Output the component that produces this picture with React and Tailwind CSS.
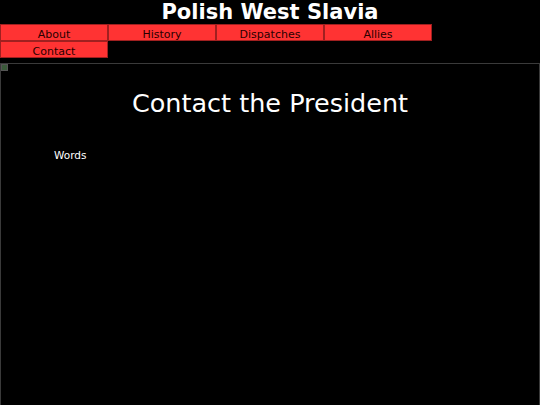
export default function App() {
  const links = ['About', 'History', 'Dispatches', 'Allies', 'Contact']
  return (
    <div className="min-h-[405px] bg-black text-white flex flex-col" style={{ fontFamily: '"DejaVu Sans", Verdana, sans-serif' }}>
      <h1 className="h-6 text-center text-[21px] font-bold leading-6">Polish West Slavia</h1>
      <nav className="w-[432px] flex flex-wrap">
        {links.map((l) => (
          <a key={l} className="w-[108px] h-[17px] bg-[#ff3333] border border-[#a02020] pt-[2px] text-[11px] leading-[15px] text-center text-[#2a0000] overflow-hidden">
            {l}
          </a>
        ))}
      </nav>
      <div className="mt-[5px] flex-1 border border-b-0 border-[#3a3a3a]">
        <svg width="8" height="8" viewBox="0 0 8 8" className="block">
          <rect x="0" y="0" width="7" height="7" fill="#555" />
          <rect x="1" y="1" width="5" height="5" fill="#3a5a3a" />
        </svg>
        <h2 className="mt-[15px] text-center text-[25.5px] leading-8">Contact the President</h2>
        <p className="mt-[28px] pl-[53px] text-[10.5px] leading-4">Words</p>
      </div>
    </div>
  )
}
